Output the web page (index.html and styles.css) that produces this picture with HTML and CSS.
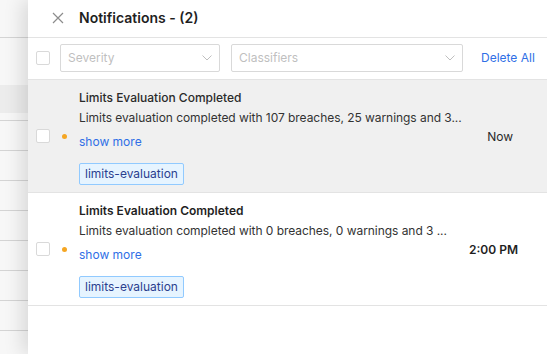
FILE: index.html
```html
<!DOCTYPE html>
<html>
<head>
  <meta charset="UTF-8">
  <title>Notifications</title>
  <link rel="stylesheet" href="styles.css">
</head>
<body>
  <div class="page">
    <div class="backdrop">
      <div class="bg-row bg-head"></div>
      <div class="bg-row bg-gap"></div>
      <div class="bg-row bg-band"></div>
      <div class="bg-row bg-spacer"></div>
      <div class="bg-row"></div>
      <div class="bg-row"></div>
      <div class="bg-row"></div>
      <div class="bg-row"></div>
      <div class="bg-row"></div>
      <div class="bg-row"></div>
      <div class="bg-row"></div>
    </div>

    <div class="drawer">
      <div class="drawer-header">
        <svg class="close-icon" width="12" height="12" viewBox="0 0 12 12">
          <path d="M1 1 L11 11 M11 1 L1 11" stroke="#8c8c8c" stroke-width="1.2" fill="none"/>
        </svg>
        <h1 class="drawer-title">Notifications - (2)</h1>
      </div>

      <div class="toolbar">
        <span class="checkbox"></span>
        <div class="select select-severity">
          <span class="placeholder">Severity</span>
          <svg width="10" height="6" viewBox="0 0 10 6"><path d="M0.5 0.5 L5 5 L9.5 0.5" stroke="#bfbfbf" fill="none"/></svg>
        </div>
        <div class="select select-classifiers">
          <span class="placeholder">Classifiers</span>
          <svg width="10" height="6" viewBox="0 0 10 6"><path d="M0.5 0.5 L5 5 L9.5 0.5" stroke="#bfbfbf" fill="none"/></svg>
        </div>
        <a class="delete-all">Delete All</a>
      </div>

      <div class="item item-read">
        <span class="checkbox"></span>
        <span class="dot"></span>
        <div class="item-body">
          <div class="item-title">Limits Evaluation Completed</div>
          <div class="item-desc">Limits evaluation completed with 107 breaches, 25 warnings and 3...</div>
          <a class="show-more">show more</a>
          <span class="tag">limits-evaluation</span>
        </div>
        <div class="item-time time-now">Now</div>
      </div>

      <div class="item item-unread">
        <span class="checkbox"></span>
        <span class="dot"></span>
        <div class="item-body">
          <div class="item-title">Limits Evaluation Completed</div>
          <div class="item-desc">Limits evaluation completed with 0 breaches, 0 warnings and 3 ...</div>
          <a class="show-more">show more</a>
          <span class="tag">limits-evaluation</span>
        </div>
        <div class="item-time">2:00 PM</div>
      </div>
    </div>
  </div>
</body>
</html>
```

FILE: styles.css
```css
* {
  margin: 0;
  padding: 0;
  box-sizing: border-box;
}

body {
  font-family: Inter, 'Noto Sans', sans-serif;
  font-size: 12px;
  color: #333;
  background: #fff;
  width: 547px;
  height: 354px;
  overflow: hidden;
}

.page {
  display: flex;
  height: 354px;
}

/* page behind the drawer */
.backdrop {
  width: 28px;
  flex-shrink: 0;
  background: #f7f7f7;
  display: flex;
  flex-direction: column;
}

.bg-row {
  height: 30px;
  border-bottom: 1px solid #d4d4d4;
  flex-shrink: 0;
}

.bg-head { height: 38px; }
.bg-gap { height: 47px; border-bottom: none; }
.bg-band { height: 28px; background: #ececec; border-bottom: none; }
.bg-spacer { height: 8px; }

/* drawer */
.drawer {
  flex: 1;
  background: #fff;
  box-shadow: -6px 0 18px rgba(0,0,0,0.12);
  position: relative;
  display: flex;
  flex-direction: column;
}

.drawer-header {
  height: 38px;
  display: flex;
  align-items: center;
  gap: 15px;
  padding-left: 24px;
  border-bottom: 1px solid #e3e3e3;
}

.close-icon {
  margin-top: -2px;
}

.drawer-title {
  font-size: 14px;
  font-weight: 600;
  color: #1f1f1f;
  margin-top: -2px;
}

.toolbar {
  height: 42px;
  display: flex;
  align-items: center;
  padding-left: 8px;
  padding-bottom: 2px;
  border-bottom: 1px solid #e3e3e3;
}

.checkbox {
  width: 14px;
  height: 14px;
  border: 1px solid #d9d9d9;
  border-radius: 2px;
  background: #fff;
  flex-shrink: 0;
}

.select {
  height: 28px;
  border: 1px solid #d9d9d9;
  border-radius: 2px;
  display: flex;
  align-items: center;
  justify-content: space-between;
  padding: 0 7px;
  margin-left: 10px;
}

.select-severity { width: 160px; }
.select-classifiers { width: 232px; margin-left: 11px; }

.placeholder {
  color: #bfbfbf;
}

.delete-all {
  color: #2f6fe6;
  margin-left: 18px;
}

/* items */
.item {
  height: 113px;
  display: flex;
  align-items: center;
  padding-left: 8px;
  border-bottom: 1px solid #e3e3e3;
}

.item-read {
  background: #f0f0f0;
}

.dot {
  width: 5px;
  height: 5px;
  border-radius: 50%;
  background: #f5a623;
  margin-left: 12px;
  margin-right: 12px;
  flex-shrink: 0;
}

.item-body {
  flex: 1;
  display: flex;
  flex-direction: column;
  align-items: flex-start;
}

.item-title {
  line-height: 20px;
  font-weight: 500;
  color: #2a2a2a;
}

.item-unread .item-title {
  font-weight: 600;
  color: #1f1f1f;
}

.item-desc {
  line-height: 20px;
  white-space: nowrap;
  letter-spacing: -0.05px;
}

.show-more {
  color: #2f6fe6;
  line-height: 20px;
  margin-top: 4px;
}

.tag {
  margin-top: 11px;
  height: 22px;
  line-height: 20px;
  padding: 0 5px;
  background: #e6f4ff;
  border: 1px solid #91caff;
  border-radius: 2px;
  color: #2b3f8f;
}

.item-time {
  width: 80px;
  text-align: right;
  padding-right: 29px;
  font-weight: 600;
  color: #1f1f1f;
}

.item-time.time-now {
  font-weight: 400;
  color: #2a2a2a;
  padding-right: 34px;
}
```
